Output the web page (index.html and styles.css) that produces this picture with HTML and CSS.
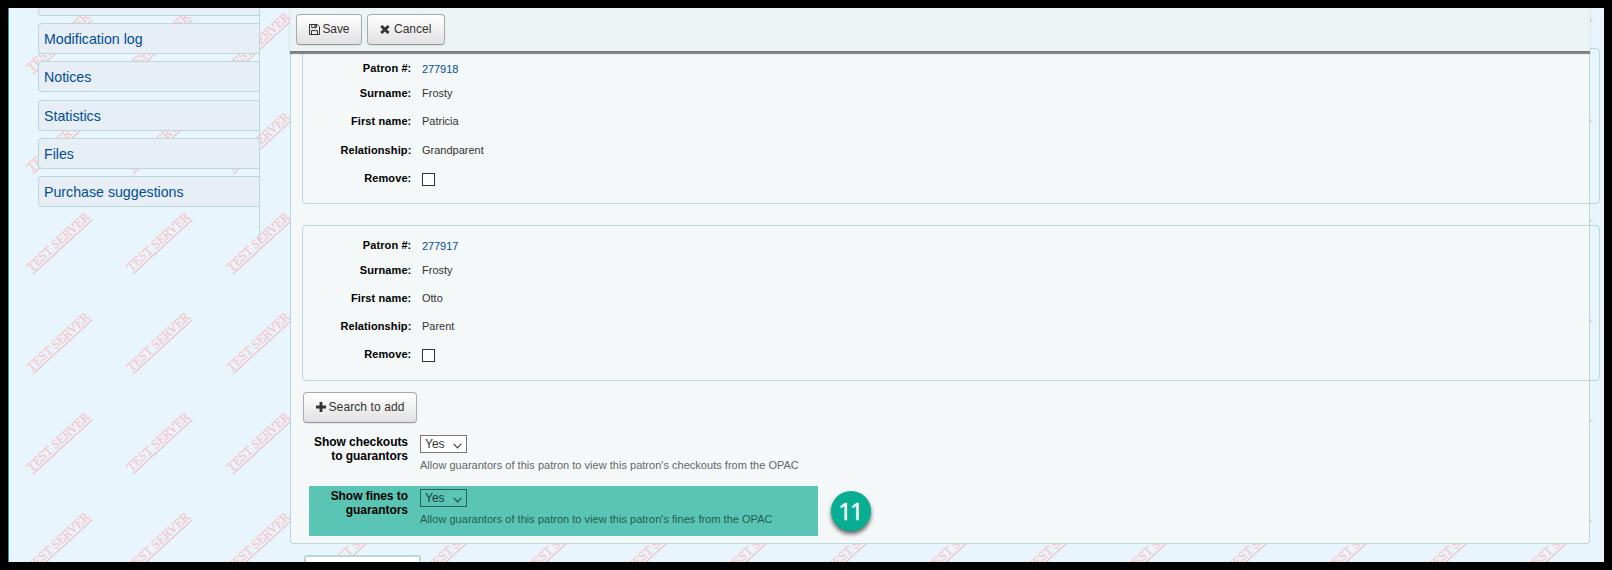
FILE: index.html
```html
<!DOCTYPE html>
<html lang="en">
<head>
<meta charset="utf-8">
<title>Patron guarantors</title>
<link rel="stylesheet" href="styles.css">
</head>
<body>
<div class="screen">
  <svg class="watermark" width="1596" height="554" aria-hidden="true">
    <defs>
      <pattern id="test-server" width="100" height="100" patternUnits="userSpaceOnUse" x="-8" y="-8">
        <g transform="translate(31.5 71.9) rotate(-42.5)">
          <text class="mark" x="0" y="0" textLength="80" lengthAdjust="spacingAndGlyphs">TEST SERVER</text>
          <rect class="mark-line" x="0" y="2" width="80" height="1.2"/>
        </g>
      </pattern>
    </defs>
    <rect width="1596" height="554" fill="url(#test-server)"/>
  </svg>

  <nav class="side">
    <a class="tab tab-cut"></a>
    <a class="tab">Modification log</a>
    <a class="tab">Notices</a>
    <a class="tab">Statistics</a>
    <a class="tab">Files</a>
    <a class="tab">Purchase suggestions</a>
  </nav>

  <main class="content">
    <section class="panel">
      <div class="toolbar">
        <button class="btn btn-save"><svg class="icon" width="11" height="11" viewBox="0 0 11 11"><path d="M.5.5h7.8l2.2 2.2v7.8H.5zM2.8.5v3.2h4.6V.5M2.5 10.5V6.6h6v3.9" fill="none" stroke="#333"/><path d="M5.5 1h1.3v2H5.5z" fill="#333"/></svg><span>Save</span></button>
        <button class="btn btn-cancel"><svg class="icon" width="10" height="9" viewBox="0 0 10 9"><path d="M1.2 1l7.4 7M8.6 1L1.2 8" stroke="#333" stroke-width="2.9"/></svg><span>Cancel</span></button>
      </div>

      <div class="guarantor first">
        <b>Patron #:</b><a class="link">277918</a>
        <b>Surname:</b><span>Frosty</span>
        <b>First name:</b><span>Patricia</span>
        <b>Relationship:</b><span>Grandparent</span>
        <b>Remove:</b><i class="check"></i>
      </div>
      <div class="guarantor second">
        <b>Patron #:</b><a class="link">277917</a>
        <b>Surname:</b><span>Frosty</span>
        <b>First name:</b><span>Otto</span>
        <b>Relationship:</b><span>Parent</span>
        <b>Remove:</b><i class="check"></i>
      </div>

      <button class="btn btn-search"><svg class="icon" width="10" height="10" viewBox="0 0 10 10"><path d="M0 5h10M5 0v10" stroke="#333" stroke-width="2.8"/></svg><span>Search to add</span></button>

      <div class="setting">
        <b class="name">Show checkouts<br>to guarantors</b>
        <div>
          <div class="select"><span>Yes</span><svg width="9" height="6" viewBox="0 0 9 6"><path d="M.7.8l3.8 4 3.8-4" fill="none" stroke="#444" stroke-width="1.2"/></svg></div>
          <p class="hint">Allow guarantors of this patron to view this patron's checkouts from the OPAC</p>
        </div>
      </div>
      <div class="marked">
        <div class="setting fines">
          <b class="name">Show fines to<br>guarantors</b>
          <div>
            <div class="select"><span>Yes</span><svg width="9" height="6" viewBox="0 0 9 6"><path d="M.7.8l3.8 4 3.8-4" fill="none" stroke="#1d4c43" stroke-width="1.2"/></svg></div>
            <p class="hint">Allow guarantors of this patron to view this patron's fines from the OPAC</p>
          </div>
        </div>
        <div class="step">11</div>
      </div>
    </section>
    <div class="next-button"></div>
  </main>
</div>
</body>
</html>
```
FILE: styles.css
```css
html { height: 570px; overflow: hidden; }
* { box-sizing: border-box; }
body {
  margin: 0;
  padding: 8px;
  height: 570px;
  overflow: hidden;
  background: #000;
  font-family: "Liberation Sans", Arial, sans-serif;
}
.screen {
  position: relative;
  width: 1596px;
  height: 554px;
  overflow: hidden;
  background: #e9f5fc;
  border-left: 1px solid #3d8ba5;
  display: flex;
}
.watermark { position: absolute; left: -1px; top: 0; }
.mark { font: 13px "Liberation Serif", serif; fill: #f4c8cd; stroke: #f4c8cd; stroke-width: .35; }
.mark-line { fill: #ecc0c9; }

.side {
  position: relative;
  width: 222px;
  height: 233px;
  margin-left: 29px;
  border-right: 1px solid #b9d8d9;
  display: flex;
  flex-direction: column;
  gap: 7.3px;
}
.tab {
  flex: none;
  height: 31px;
  padding-left: 5px;
  border: 1px solid #b9d8d9;
  border-right: 0;
  border-radius: 4px 0 0 4px;
  background: #e8eef5;
  color: #004d99;
  font-size: 14.2px;
  line-height: 30px;
}
.tab-cut { height: 31px; margin-top: -23.2px; }

.content { position: relative; margin-left: 30px; }
.panel {
  width: 1300px;
  height: 536px;
  border: 1px solid #b9d8d9;
  border-top: 0;
  border-radius: 0 0 4px 4px;
  background: #f4f8f9;
}
.toolbar {
  position: relative;
  z-index: 1;
  display: flex;
  gap: 5px;
  height: 45px;
  margin: 0 -1px;
  padding: 6px;
  background: #ebf3f4;
  border-bottom: 2px solid #7a7e80;
  box-shadow: 0 1px 1px rgba(0,0,0,.4);
}
.btn {
  display: flex;
  align-items: center;
  height: 31px;
  padding: 0 0 1px 12px;
  border: 1px solid #aaa;
  border-bottom-color: #999;
  border-radius: 4px;
  background: linear-gradient(#fff, #e1e1e1);
  box-shadow: 0 1px 1px rgba(0,0,0,.08);
  color: #333;
  font: 12px "Liberation Sans", Arial, sans-serif;
}
.icon { flex: none; }
.btn-save { width: 66px; gap: 3px; padding-left: 11.5px; letter-spacing: -.15px; }
.btn-cancel { width: 78px; gap: 4px; padding-left: 12px; }
.btn-search { width: 114px; gap: 3px; margin: 11px 0 0 12px; padding-left: 11.5px; letter-spacing: .1px; }

.guarantor {
  width: 1298px;
  height: 156px;
  margin: 21px 0 0 11px;
  padding-top: 6px;
  border: 1px solid #b9d8d9;
  border-radius: 4px;
  display: grid;
  grid-template-columns: 108px 1fr;
  grid-template-rows: 25px 25px 31px 27px 29px;
  column-gap: 11px;
  align-items: center;
  font-size: 11px;
  color: #333;
}
.guarantor.first { margin-top: -5px; }
.guarantor.second { grid-template-rows: 25px 25px 31px 25px 31px; }
.guarantor b { text-align: right; color: #000; letter-spacing: .1px; margin-right: -.4px; }
.link { color: #004d99; padding-top: 2px; letter-spacing: -.08px; }
.check { width: 13px; height: 13px; border: 1px solid #333; background: #fff; margin-top: 3px; }

.setting {
  display: grid;
  grid-template-columns: 117px 1fr;
  column-gap: 12px;
  margin-top: 12px;
  height: 51px;
}
.name { text-align: right; font-size: 12px; line-height: 14px; letter-spacing: -.05px; color: #000; }
.select {
  width: 47px;
  height: 18px;
  border: 1px solid #777;
  background: #fff;
  display: flex;
  align-items: center;
  justify-content: space-between;
  padding: 0 4px;
  font-size: 12px;
  line-height: 16px;
  color: #333;
}
.select svg { margin-top: 4px; }
.hint { margin: 6px 0 0; font-size: 11px; line-height: 13px; color: #666; letter-spacing: .02px; white-space: nowrap; }
.marked { display: flex; gap: 13px; }
.fines {
  width: 509px;
  height: 50px;
  margin: 0 0 0 18px;
  padding-top: 3px;
  grid-template-columns: 99px 1fr;
  background: #5ac5b4;
}
.fines .select { background: transparent; border-color: #2a6158; color: #173c35; }
.fines .hint { color: #255c52; }
.step {
  width: 40px;
  height: 40px;
  margin-top: 5px;
  border-radius: 50%;
  background: #07ae91;
  box-shadow: 0 3px 4px rgba(0,0,0,.6);
  color: #fff;
  font: 23.5px/40px "Open Sans", "Noto Sans", sans-serif;
  -webkit-text-stroke: .5px #fff;
  letter-spacing: -1.8px;
  text-indent: -2px;
  text-align: center;
}
.next-button {
  width: 117px;
  height: 30px;
  margin: 11px 0 0 14px;
  border: 2px solid #b9d8d9;
  border-radius: 3px;
  background: #fff;
}
```
